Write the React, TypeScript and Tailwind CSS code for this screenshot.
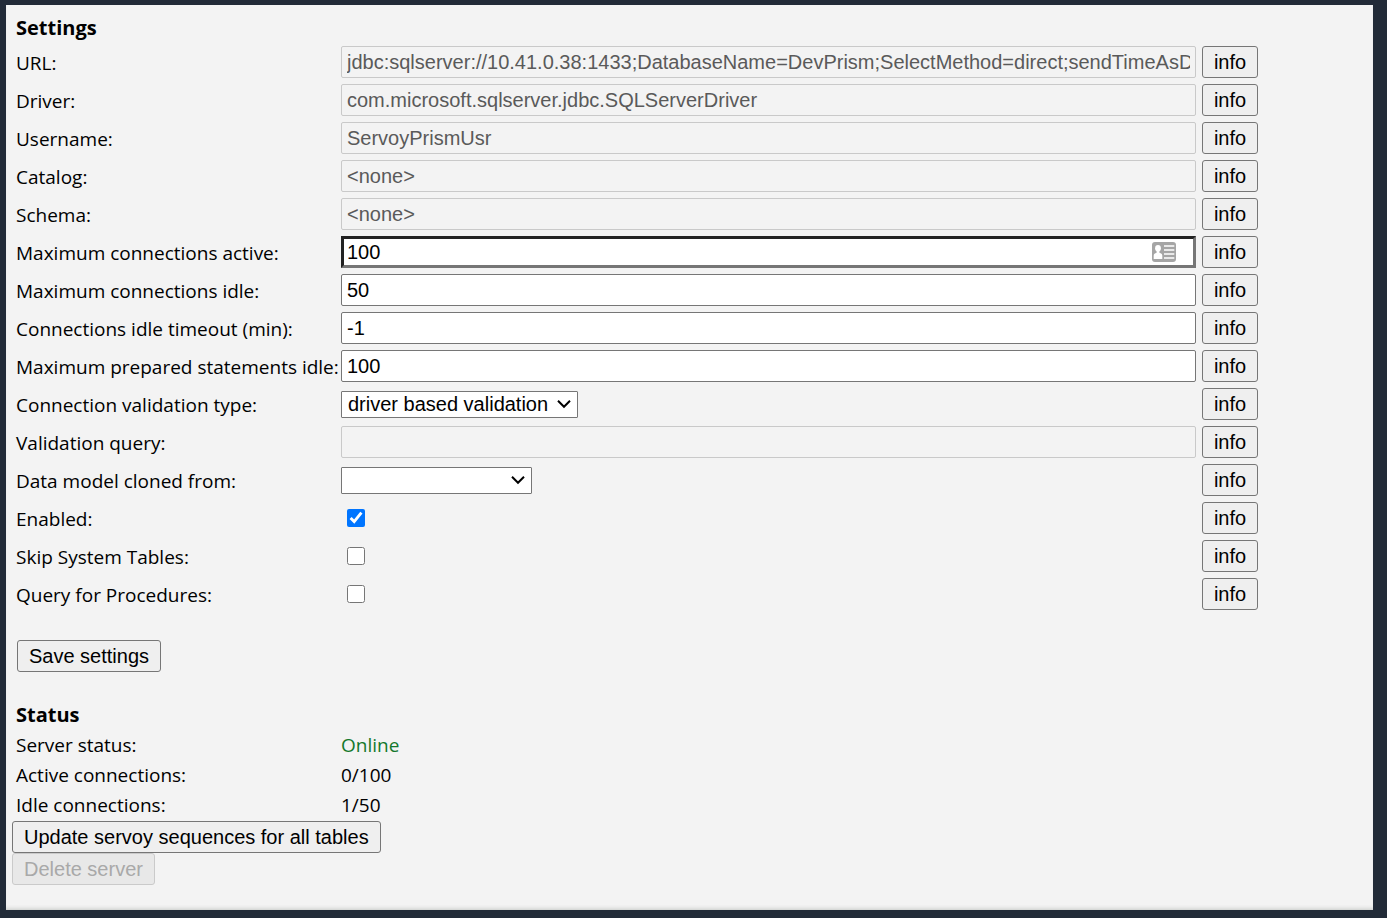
import { useState, type ReactNode } from "react";

const fieldBase = "block h-8 w-full rounded-xs border font-['Liberation_Sans',Arial,sans-serif] text-xl";
const enabledField = `${fieldBase} border-[#767676] bg-white px-[5px] text-black`;
const disabledField = `${fieldBase} border-[#c9c9c9] bg-[#f3f3f3] px-[5px] text-[#5a5a5a]`;
const insetField = `block h-8 w-full border-3 border-t-[#222] border-l-[#222] border-r-[#767676] border-b-[#767676] bg-white px-[3px] font-['Liberation_Sans',Arial,sans-serif] text-xl text-black outline-none`;
const buttonBase = "h-8 rounded-[3px] border border-[#767676] bg-[#efefef] font-['Liberation_Sans',Arial,sans-serif] text-xl leading-6 text-black";

function Row({ id, label, children }: { id: string; label: string; children: ReactNode }) {
  return (
    <div className="grid grid-cols-[319px_minmax(0,1fr)_56px] items-center gap-x-1.5">
      <label htmlFor={id} className="pt-0.5 whitespace-nowrap">
        {label}
      </label>
      <div className="flex h-8 items-center">{children}</div>
      <button type="button" className={buttonBase}>
        info
      </button>
    </div>
  );
}

function TextRow({ id, label, value, disabled }: { id: string; label: string; value: string; disabled?: boolean }) {
  return (
    <Row id={id} label={label}>
      <input id={id} type="text" defaultValue={value} disabled={disabled} className={disabled ? disabledField : enabledField} />
    </Row>
  );
}

function SelectRow({ id, label, width, options }: { id: string; label: string; width: string; options: string[] }) {
  return (
    <Row id={id} label={label}>
      <div className={`relative ${width}`}>
        <select
          id={id}
          className="block h-[27px] w-full appearance-none rounded-[1px] border border-[#767676] bg-white pl-1.5 font-['Liberation_Sans',Arial,sans-serif] text-xl leading-6 text-black"
        >
          {options.map((option) => (
            <option key={option}>{option}</option>
          ))}
        </select>
        <svg viewBox="0 0 14 10" className="pointer-events-none absolute top-2 right-[7px] h-2.5 w-3.5" fill="none" stroke="#000" strokeWidth="2">
          <path d="M1 1.8 7 7.8 13 1.8" />
        </svg>
      </div>
    </Row>
  );
}

function CheckRow({ id, label, initial }: { id: string; label: string; initial: boolean }) {
  const [checked, setChecked] = useState(initial);
  return (
    <Row id={id} label={label}>
      <input
        id={id}
        type="checkbox"
        checked={checked}
        onChange={(event) => setChecked(event.target.checked)}
        className="ml-1.5 size-[18px]"
      />
    </Row>
  );
}

function ContactCardIcon() {
  return (
    <svg viewBox="0 0 24 20" className="pointer-events-none absolute top-1.5 right-5 h-5 w-6">
      <rect width="24" height="20" rx="3" fill="#a5a5a5" />
      <ellipse cx="6" cy="6.2" rx="2.9" ry="3.3" fill="#fff" />
      <path d="M4.6 8.2h2.8v2.6c1.8.5 2.9 1.3 2.9 2.9V17H1.7v-3.3c0-1.6 1.1-2.4 2.9-2.9z" fill="#fff" />
      <path d="M12 4h10.3M12 8h10.3M12 12h10.3M12 16h10.3" stroke="#fff" strokeWidth="1.6" />
    </svg>
  );
}

const statusRows = [
  { label: "Server status:", value: "Online", tone: "text-[#13782c]" },
  { label: "Active connections:", value: "0/100", tone: "text-black" },
  { label: "Idle connections:", value: "1/50", tone: "text-black" },
];

export default function App() {
  return (
    <div className="flex min-h-screen bg-[#222b38] pt-[5px] pr-3.5 pb-2 pl-1.5">
      <main className="flex-1 bg-[#f3f3f3] pt-[11px] pr-[115px] pl-2.5 font-[Tahoma,'Open_Sans','Noto_Sans',sans-serif] text-[19px] leading-6 text-black shadow-[inset_0_-4px_4px_-3px_#c4c8c4]">
        <form className="flex flex-col gap-1.5" onSubmit={(event) => event.preventDefault()}>
          <h2 className="text-xl leading-6 font-bold">Settings</h2>
          <TextRow
            id="url"
            label="URL:"
            value="jdbc:sqlserver://10.41.0.38:1433;DatabaseName=DevPrism;SelectMethod=direct;sendTimeAsDatetime=false"
            disabled
          />
          <TextRow id="driver" label="Driver:" value="com.microsoft.sqlserver.jdbc.SQLServerDriver" disabled />
          <TextRow id="username" label="Username:" value="ServoyPrismUsr" disabled />
          <TextRow id="catalog" label="Catalog:" value="<none>" disabled />
          <TextRow id="schema" label="Schema:" value="<none>" disabled />
          <Row id="max-active" label="Maximum connections active:">
            <div className="relative w-full">
              <input id="max-active" type="text" defaultValue="100" className={insetField} />
              <ContactCardIcon />
            </div>
          </Row>
          <TextRow id="max-idle" label="Maximum connections idle:" value="50" />
          <TextRow id="idle-timeout" label="Connections idle timeout (min):" value="-1" />
          <TextRow id="max-statements" label="Maximum prepared statements idle:" value="100" />
          <SelectRow
            id="validation-type"
            label="Connection validation type:"
            width="w-[237px]"
            options={["driver based validation"]}
          />
          <TextRow id="validation-query" label="Validation query:" value="" disabled />
          <SelectRow id="cloned-from" label="Data model cloned from:" width="w-[191px]" options={[""]} />
          <CheckRow id="enabled" label="Enabled:" initial={true} />
          <CheckRow id="skip-system" label="Skip System Tables:" initial={false} />
          <CheckRow id="query-procedures" label="Query for Procedures:" initial={false} />
          <button type="submit" className={`${buttonBase} mt-6 ml-px w-36 self-start`}>
            Save settings
          </button>
        </form>
        <section className="mt-[31px]">
          <h2 className="text-xl leading-6 font-bold">Status</h2>
          <dl className="mt-1.5 flex flex-col gap-1.5">
            {statusRows.map((row) => (
              <div key={row.label} className="grid grid-cols-[319px_minmax(0,1fr)] gap-x-1.5">
                <dt>{row.label}</dt>
                <dd className={row.tone}>{row.value}</dd>
              </div>
            ))}
          </dl>
        </section>
        <div className="mt-1 -ml-1 flex flex-col items-start">
          <button type="button" className={`${buttonBase} px-[11px]`}>
            Update servoy sequences for all tables
          </button>
          <button
            type="button"
            disabled
            className="h-8 rounded-[3px] border border-[#cacaca] bg-[#e8e8e8] px-[11px] font-['Liberation_Sans',Arial,sans-serif] text-xl leading-6 text-[#a9a9a9]"
          >
            Delete server
          </button>
        </div>
      </main>
    </div>
  );
}
